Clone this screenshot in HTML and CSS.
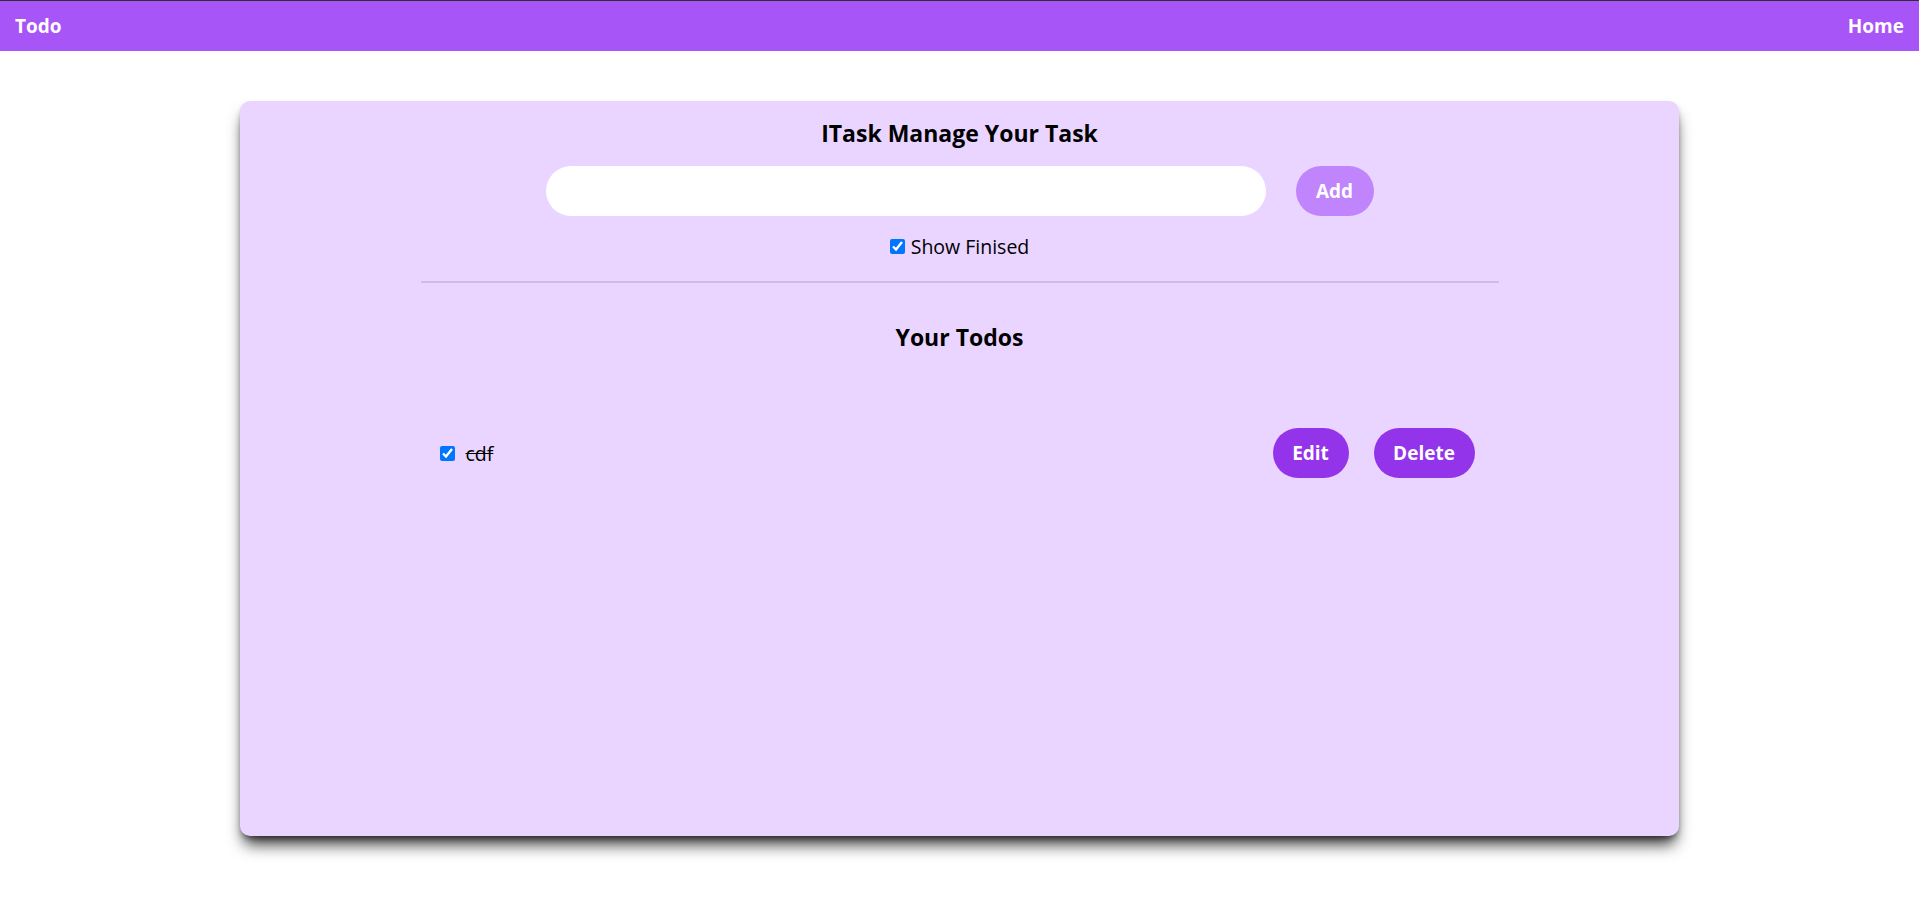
FILE: index.html
```html
<!DOCTYPE html>
<html lang="en">
<head>
<meta charset="utf-8">
<title>ITask</title>
<link rel="stylesheet" href="styles.css">
</head>
<body>
<nav class="navbar">
  <span class="brand">Todo</span>
  <span class="nav-link">Home</span>
</nav>
<main class="card">
  <h1 class="title">ITask Manage Your Task</h1>
  <div class="add-row">
    <input class="task-input" type="text">
    <button class="btn-add">Add</button>
  </div>
  <label class="show-finished"><input type="checkbox" checked class="check">Show Finised</label>
  <div class="divider"></div>
  <h2 class="subtitle">Your Todos</h2>
  <div class="todo-list">
    <div class="todo">
      <div class="todo-left">
        <input type="checkbox" checked class="check">
        <span class="todo-text done">cdf</span>
      </div>
      <div class="todo-actions">
        <button class="btn btn-edit">Edit</button>
        <button class="btn btn-delete">Delete</button>
      </div>
    </div>
  </div>
</main>
</body>
</html>
```
FILE: styles.css
```css
* { box-sizing: border-box; }
html, body { margin: 0; padding: 0; background: #fff; }
body {
  border-top: 1px solid #2f2f2f;
  font-family: "Open Sans", "Noto Sans", sans-serif;
  color: #000;
  height: 903px;
  overflow: hidden;
}
.navbar {
  height: 50px;
  background: #a855f7;
  color: #fff;
  display: flex;
  justify-content: space-between;
  align-items: center;
  padding: 0 15px;
  font-weight: 700;
  font-size: 19px;
}
.card {
  width: 75%;
  height: 735px;
  margin: 50px auto 0;
  background: #e9d5ff;
  border-radius: 10px;
  padding-top: 15px;
  box-shadow: 0 12px 16px -4px rgba(0,0,0,0.8), 0 4px 7px -3px rgba(0,0,0,0.6);
  display: flex;
  flex-direction: column;
  align-items: center;
}
.title {
  margin: 0;
  font-size: 23px;
  line-height: 35px;
  font-weight: 700;
}
.add-row {
  margin-top: 15px;
  display: flex;
  gap: 30px;
}
.task-input {
  width: 720px;
  height: 50px;
  border: none;
  border-radius: 25px;
  background: #fff;
  outline: none;
  padding: 0 20px;
  font-size: 20px;
}
.btn-add {
  width: 78px;
  height: 50px;
  border: none;
  border-radius: 25px;
  background: #c084fc;
  color: #fff;
  font-family: inherit;
  font-weight: 700;
  font-size: 19px;
  padding: 0;
}
.show-finished {
  margin-top: 15px;
  height: 30px;
  display: flex;
  align-items: center;
  font-size: 19.5px;
  margin-left: 0;
}
.check {
  width: 15px;
  height: 15px;
  margin: 0 6px 0 0;
  accent-color: #0075ff;
}
.divider {
  margin-top: 20px;
  width: 1078px;
  height: 2px;
  background: #d0bbe5;
}
.subtitle {
  margin: 37px 0 0;
  font-size: 23px;
  line-height: 35px;
  font-weight: 700;
}
.todo-list {
  width: 1078px;
  margin-top: 73px;
}
.todo {
  display: flex;
  justify-content: space-between;
  align-items: center;
  padding: 0 24px 0 19px;
}
.todo-left {
  display: flex;
  align-items: center;
  font-size: 19.5px;
}
.todo-left .check { margin-right: 11px; }
.done { text-decoration: line-through; }
.todo-actions {
  display: flex;
  gap: 25px;
}
.btn {
  height: 50px;
  border: none;
  border-radius: 25px;
  background: #9333ea;
  color: #fff;
  font-family: inherit;
  font-weight: 700;
  font-size: 19px;
  padding: 0;
}
.btn-edit { width: 76px; }
.btn-delete { width: 101px; }
```
